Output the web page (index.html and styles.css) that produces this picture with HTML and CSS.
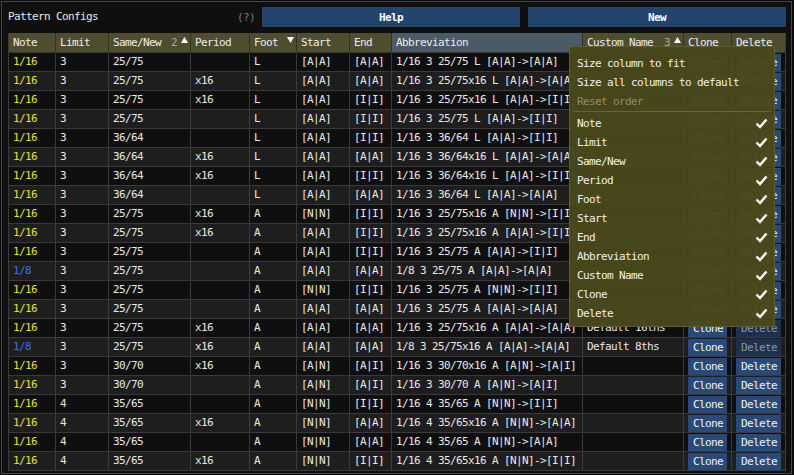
FILE: index.html
```html
<!DOCTYPE html>
<html>
<head>
<meta charset="utf-8">
<link rel="stylesheet" href="styles.css">
</head>
<body>
<div class="window">
  <div class="topbar">
    <div class="title">Pattern Configs</div>
    <div class="helpq">(?)</div>
    <div class="tbtns">
      <div class="tbtn">Help</div>
      <div class="tbtn">New</div>
    </div>
  </div>
  <div class="table">
    <div class="row head">
      <div class="c">Note</div>
      <div class="c">Limit</div>
      <div class="c sortc">Same/New<span class="sort"><span class="sn">2</span><svg class="tri" width="7" height="6" viewBox="0 0 7 6"><polygon points="3.5,0 7,6 0,6" fill="#fff"/></svg></span></div>
      <div class="c">Period</div>
      <div class="c sortc">Foot<span class="sort"><svg class="tri" width="7" height="6" viewBox="0 0 7 6"><polygon points="0,0 7,0 3.5,6" fill="#fff"/></svg></span></div>
      <div class="c">Start</div>
      <div class="c">End</div>
      <div class="c hover">Abbreviation</div>
      <div class="c sortc">Custom Name<span class="sort"><span class="sn">3</span><svg class="tri" width="7" height="6" viewBox="0 0 7 6"><polygon points="3.5,0 7,6 0,6" fill="#fff"/></svg></span></div>
      <div class="c">Clone</div>
      <div class="c">Delete</div>
    </div>
    <div class="body">
      <div class="row"><div class="c y">1/16</div><div class="c">3</div><div class="c">25/75</div><div class="c"></div><div class="c">L</div><div class="c">[A|A]</div><div class="c">[A|A]</div><div class="c">1/16 3 25/75 L [A|A]-&gt;[A|A]</div><div class="c"></div><div class="c"><span class="btn">Clone</span></div><div class="c"><span class="btn">Delete</span></div></div>
      <div class="row"><div class="c y">1/16</div><div class="c">3</div><div class="c">25/75</div><div class="c">x16</div><div class="c">L</div><div class="c">[A|A]</div><div class="c">[A|A]</div><div class="c">1/16 3 25/75x16 L [A|A]-&gt;[A|A]</div><div class="c"></div><div class="c"><span class="btn">Clone</span></div><div class="c"><span class="btn">Delete</span></div></div>
      <div class="row"><div class="c y">1/16</div><div class="c">3</div><div class="c">25/75</div><div class="c">x16</div><div class="c">L</div><div class="c">[A|A]</div><div class="c">[I|I]</div><div class="c">1/16 3 25/75x16 L [A|A]-&gt;[I|I]</div><div class="c"></div><div class="c"><span class="btn">Clone</span></div><div class="c"><span class="btn">Delete</span></div></div>
      <div class="row"><div class="c y">1/16</div><div class="c">3</div><div class="c">25/75</div><div class="c"></div><div class="c">L</div><div class="c">[A|A]</div><div class="c">[I|I]</div><div class="c">1/16 3 25/75 L [A|A]-&gt;[I|I]</div><div class="c"></div><div class="c"><span class="btn">Clone</span></div><div class="c"><span class="btn">Delete</span></div></div>
      <div class="row"><div class="c y">1/16</div><div class="c">3</div><div class="c">36/64</div><div class="c"></div><div class="c">L</div><div class="c">[A|A]</div><div class="c">[I|I]</div><div class="c">1/16 3 36/64 L [A|A]-&gt;[I|I]</div><div class="c"></div><div class="c"><span class="btn">Clone</span></div><div class="c"><span class="btn">Delete</span></div></div>
      <div class="row"><div class="c y">1/16</div><div class="c">3</div><div class="c">36/64</div><div class="c">x16</div><div class="c">L</div><div class="c">[A|A]</div><div class="c">[A|A]</div><div class="c">1/16 3 36/64x16 L [A|A]-&gt;[A|A]</div><div class="c"></div><div class="c"><span class="btn">Clone</span></div><div class="c"><span class="btn">Delete</span></div></div>
      <div class="row"><div class="c y">1/16</div><div class="c">3</div><div class="c">36/64</div><div class="c">x16</div><div class="c">L</div><div class="c">[A|A]</div><div class="c">[I|I]</div><div class="c">1/16 3 36/64x16 L [A|A]-&gt;[I|I]</div><div class="c"></div><div class="c"><span class="btn">Clone</span></div><div class="c"><span class="btn">Delete</span></div></div>
      <div class="row"><div class="c y">1/16</div><div class="c">3</div><div class="c">36/64</div><div class="c"></div><div class="c">L</div><div class="c">[A|A]</div><div class="c">[A|A]</div><div class="c">1/16 3 36/64 L [A|A]-&gt;[A|A]</div><div class="c"></div><div class="c"><span class="btn">Clone</span></div><div class="c"><span class="btn">Delete</span></div></div>
      <div class="row"><div class="c y">1/16</div><div class="c">3</div><div class="c">25/75</div><div class="c">x16</div><div class="c">A</div><div class="c">[N|N]</div><div class="c">[I|I]</div><div class="c">1/16 3 25/75x16 A [N|N]-&gt;[I|I]</div><div class="c"></div><div class="c"><span class="btn">Clone</span></div><div class="c"><span class="btn">Delete</span></div></div>
      <div class="row"><div class="c y">1/16</div><div class="c">3</div><div class="c">25/75</div><div class="c">x16</div><div class="c">A</div><div class="c">[A|A]</div><div class="c">[I|I]</div><div class="c">1/16 3 25/75x16 A [A|A]-&gt;[I|I]</div><div class="c"></div><div class="c"><span class="btn">Clone</span></div><div class="c"><span class="btn">Delete</span></div></div>
      <div class="row"><div class="c y">1/16</div><div class="c">3</div><div class="c">25/75</div><div class="c"></div><div class="c">A</div><div class="c">[A|A]</div><div class="c">[I|I]</div><div class="c">1/16 3 25/75 A [A|A]-&gt;[I|I]</div><div class="c"></div><div class="c"><span class="btn">Clone</span></div><div class="c"><span class="btn">Delete</span></div></div>
      <div class="row"><div class="c b">1/8</div><div class="c">3</div><div class="c">25/75</div><div class="c"></div><div class="c">A</div><div class="c">[A|A]</div><div class="c">[A|A]</div><div class="c">1/8 3 25/75 A [A|A]-&gt;[A|A]</div><div class="c"></div><div class="c"><span class="btn">Clone</span></div><div class="c"><span class="btn">Delete</span></div></div>
      <div class="row"><div class="c y">1/16</div><div class="c">3</div><div class="c">25/75</div><div class="c"></div><div class="c">A</div><div class="c">[N|N]</div><div class="c">[I|I]</div><div class="c">1/16 3 25/75 A [N|N]-&gt;[I|I]</div><div class="c"></div><div class="c"><span class="btn">Clone</span></div><div class="c"><span class="btn">Delete</span></div></div>
      <div class="row"><div class="c y">1/16</div><div class="c">3</div><div class="c">25/75</div><div class="c"></div><div class="c">A</div><div class="c">[A|A]</div><div class="c">[A|A]</div><div class="c">1/16 3 25/75 A [A|A]-&gt;[A|A]</div><div class="c"></div><div class="c"><span class="btn">Clone</span></div><div class="c"><span class="btn">Delete</span></div></div>
      <div class="row"><div class="c y">1/16</div><div class="c">3</div><div class="c">25/75</div><div class="c">x16</div><div class="c">A</div><div class="c">[A|A]</div><div class="c">[A|A]</div><div class="c">1/16 3 25/75x16 A [A|A]-&gt;[A|A]</div><div class="c">Default 16ths</div><div class="c"><span class="btn">Clone</span></div><div class="c"><span class="btn off">Delete</span></div></div>
      <div class="row"><div class="c b">1/8</div><div class="c">3</div><div class="c">25/75</div><div class="c">x16</div><div class="c">A</div><div class="c">[A|A]</div><div class="c">[A|A]</div><div class="c">1/8 3 25/75x16 A [A|A]-&gt;[A|A]</div><div class="c">Default 8ths</div><div class="c"><span class="btn">Clone</span></div><div class="c"><span class="btn off">Delete</span></div></div>
      <div class="row"><div class="c y">1/16</div><div class="c">3</div><div class="c">30/70</div><div class="c">x16</div><div class="c">A</div><div class="c">[A|N]</div><div class="c">[A|I]</div><div class="c">1/16 3 30/70x16 A [A|N]-&gt;[A|I]</div><div class="c"></div><div class="c"><span class="btn">Clone</span></div><div class="c"><span class="btn">Delete</span></div></div>
      <div class="row"><div class="c y">1/16</div><div class="c">3</div><div class="c">30/70</div><div class="c"></div><div class="c">A</div><div class="c">[A|N]</div><div class="c">[A|I]</div><div class="c">1/16 3 30/70 A [A|N]-&gt;[A|I]</div><div class="c"></div><div class="c"><span class="btn">Clone</span></div><div class="c"><span class="btn">Delete</span></div></div>
      <div class="row"><div class="c y">1/16</div><div class="c">4</div><div class="c">35/65</div><div class="c"></div><div class="c">A</div><div class="c">[N|N]</div><div class="c">[I|I]</div><div class="c">1/16 4 35/65 A [N|N]-&gt;[I|I]</div><div class="c"></div><div class="c"><span class="btn">Clone</span></div><div class="c"><span class="btn">Delete</span></div></div>
      <div class="row"><div class="c y">1/16</div><div class="c">4</div><div class="c">35/65</div><div class="c">x16</div><div class="c">A</div><div class="c">[N|N]</div><div class="c">[A|A]</div><div class="c">1/16 4 35/65x16 A [N|N]-&gt;[A|A]</div><div class="c"></div><div class="c"><span class="btn">Clone</span></div><div class="c"><span class="btn">Delete</span></div></div>
      <div class="row"><div class="c y">1/16</div><div class="c">4</div><div class="c">35/65</div><div class="c"></div><div class="c">A</div><div class="c">[N|N]</div><div class="c">[A|A]</div><div class="c">1/16 4 35/65 A [N|N]-&gt;[A|A]</div><div class="c"></div><div class="c"><span class="btn">Clone</span></div><div class="c"><span class="btn">Delete</span></div></div>
      <div class="row"><div class="c y">1/16</div><div class="c">4</div><div class="c">35/65</div><div class="c">x16</div><div class="c">A</div><div class="c">[N|N]</div><div class="c">[I|I]</div><div class="c">1/16 4 35/65x16 A [N|N]-&gt;[I|I]</div><div class="c"></div><div class="c"><span class="btn">Clone</span></div><div class="c"><span class="btn">Delete</span></div></div>
    </div>
  </div>
</div>
<div class="popup">
  <div class="item">Size column to fit</div>
  <div class="item">Size all columns to default</div>
  <div class="item dis">Reset order</div>
  <div class="sep"></div>
  <div class="item">Note<svg class="chk" width="13" height="11" viewBox="0 0 13 11"><polyline points="1.5,5.5 5,9 11.5,1.5" fill="none" stroke="#fff" stroke-width="2.4"/></svg></div>
  <div class="item">Limit<svg class="chk" width="13" height="11" viewBox="0 0 13 11"><polyline points="1.5,5.5 5,9 11.5,1.5" fill="none" stroke="#fff" stroke-width="2.4"/></svg></div>
  <div class="item">Same/New<svg class="chk" width="13" height="11" viewBox="0 0 13 11"><polyline points="1.5,5.5 5,9 11.5,1.5" fill="none" stroke="#fff" stroke-width="2.4"/></svg></div>
  <div class="item">Period<svg class="chk" width="13" height="11" viewBox="0 0 13 11"><polyline points="1.5,5.5 5,9 11.5,1.5" fill="none" stroke="#fff" stroke-width="2.4"/></svg></div>
  <div class="item">Foot<svg class="chk" width="13" height="11" viewBox="0 0 13 11"><polyline points="1.5,5.5 5,9 11.5,1.5" fill="none" stroke="#fff" stroke-width="2.4"/></svg></div>
  <div class="item">Start<svg class="chk" width="13" height="11" viewBox="0 0 13 11"><polyline points="1.5,5.5 5,9 11.5,1.5" fill="none" stroke="#fff" stroke-width="2.4"/></svg></div>
  <div class="item">End<svg class="chk" width="13" height="11" viewBox="0 0 13 11"><polyline points="1.5,5.5 5,9 11.5,1.5" fill="none" stroke="#fff" stroke-width="2.4"/></svg></div>
  <div class="item">Abbreviation<svg class="chk" width="13" height="11" viewBox="0 0 13 11"><polyline points="1.5,5.5 5,9 11.5,1.5" fill="none" stroke="#fff" stroke-width="2.4"/></svg></div>
  <div class="item">Custom Name<svg class="chk" width="13" height="11" viewBox="0 0 13 11"><polyline points="1.5,5.5 5,9 11.5,1.5" fill="none" stroke="#fff" stroke-width="2.4"/></svg></div>
  <div class="item">Clone<svg class="chk" width="13" height="11" viewBox="0 0 13 11"><polyline points="1.5,5.5 5,9 11.5,1.5" fill="none" stroke="#fff" stroke-width="2.4"/></svg></div>
  <div class="item">Delete<svg class="chk" width="13" height="11" viewBox="0 0 13 11"><polyline points="1.5,5.5 5,9 11.5,1.5" fill="none" stroke="#fff" stroke-width="2.4"/></svg></div>
</div>
</body>
</html>
```
FILE: styles.css
```css
html, body {
  margin: 0;
  padding: 0;
  background: #0b0b0b;
}
body {
  font-family: "DejaVu Sans Mono", "Liberation Mono", monospace;
  font-size: 11px;
  letter-spacing: -0.62px;
  color: #e8e8e8;
  position: relative;
  width: 794px;
  height: 475px;
  overflow: hidden;
}
.window {
  box-sizing: border-box;
  margin: 1px 0 0 1px;
  width: 791px;
  height: 473px;
  border: 1px solid #464646;
  background: #0f0f0f;
  padding: 5px 5px 0 6px;
}
.topbar {
  display: flex;
  align-items: center;
  height: 20px;
}
.title {
  width: 229px;
  margin-top: -2px;
}
.helpq {
  width: 25px;
  color: #7e7e7e;
}
.tbtns {
  flex: 1;
  display: flex;
  gap: 8px;
  height: 20px;
}
.tbtn {
  flex: 1;
  background: #23446c;
  display: flex;
  align-items: center;
  justify-content: center;
  color: #fff;
  font-weight: bold;
}
.table {
  margin-top: 6px;
  width: 778px;
  box-sizing: border-box;
  border-left: 1px solid #3c3c3c;
  border-right: 1px solid #3c3c3c;
}
.row {
  display: grid;
  grid-template-columns: 46px 53px 82px 59px 47px 53px 42px 191px 101px 48px 54px;
  height: 18px;
  border-bottom: 1px solid #3a3a3a;
}
.body .row:nth-child(odd) {
  background: #0f0f0f;
}
.body .row:nth-child(even) {
  background: #1e1e1e;
}
.c {
  box-sizing: border-box;
  padding: 0 4px;
  line-height: 18px;
  white-space: nowrap;
  overflow: hidden;
  border-left: 1px solid #3a3a3a;
}
.c:first-child {
  border-left: none;
}
.head {
  background: #4e4e2f;
  height: 19px;
  border-bottom: 1px solid #3c3c2c;
}
.head .c {
  line-height: 19px;
  border-left-color: #33331f;
  color: #ececec;
}
.head .hover {
  background: #4a5a67;
}
.sortc {
  display: flex;
  padding-right: 2px;
}
.sort {
  margin-left: auto;
  display: flex;
  align-items: flex-start;
}
.sn {
  color: #a9a9a0;
  margin-right: 4px;
}
.tri {
  margin-top: 4px;
}
.y {
  color: #e4e41c;
}
.b {
  color: #3f6ef0;
}
.btn {
  display: inline-block;
  height: 17px;
  line-height: 17px;
  margin-top: 1px;
  padding: 0 4px 0 5px;
  background: #294a79;
  color: #f0f0f0;
  vertical-align: top;
}
.btn.off {
  background: #1c3150;
  color: #8a95a2;
}
.popup {
  position: absolute;
  left: 569px;
  top: 46px;
  width: 206px;
  height: 281px;
  box-sizing: border-box;
  border: 1px solid #5e5c36;
  background: rgba(73, 71, 27, 0.97);
  padding: 7px 0 3px 0;
}
.item {
  height: 19px;
  display: flex;
  align-items: center;
  justify-content: space-between;
  padding: 0 6px 0 7px;
  color: #f0f0f0;
}
.item.dis {
  color: #8e8c6e;
}
.sep {
  height: 1px;
  margin: 0 3px 2px 3px;
  background: #66643e;
}
.chk {
  display: block;
}
```
